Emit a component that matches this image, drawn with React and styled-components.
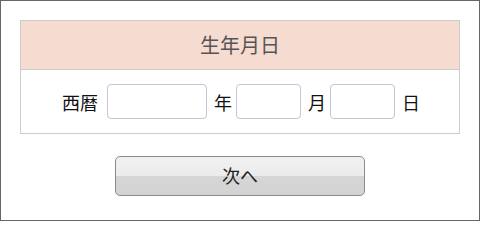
import React from "react";
import styled, { createGlobalStyle } from "styled-components";

const Global = createGlobalStyle`
  html, body { margin: 0; padding: 0; background: #fff; }
  body { font-family: "Noto Sans CJK JP", "Noto Sans", sans-serif; }
  * { box-sizing: border-box; }
`;

const Frame = styled.div`
  width: 480px;
  height: 221px;
  border: 1px solid #666;
  padding: 19px 19px 0 19px;
  display: flex;
  flex-direction: column;
  align-items: center;
`;

const Table = styled.div`
  width: 440px;
  border: 1px solid #cccccc;
`;

const Header = styled.div`
  height: 49px;
  background: #f5dbd0;
  border-bottom: 1px solid #cccccc;
  display: flex;
  align-items: center;
  justify-content: center;
  font-size: 20px;
  color: #555;
  padding-bottom: 2px;
`;

const Body = styled.div`
  height: 63px;
  display: flex;
  align-items: center;
  justify-content: center;
  padding-left: 2px;
  font-size: 18px;
  color: #111;
`;

const Label = styled.span`
  line-height: 1;
  margin-right: ${(p) => p.$mr}px;
  margin-left: ${(p) => p.$ml || 0}px;
`;

const Field = styled.input`
  width: ${(p) => p.$w}px;
  height: 35px;
  border: 1px solid #c4c4d4;
  border-radius: 4px;
  background: #fff;
  margin: 0;
  padding: 0 4px;
  font-size: 16px;
  outline: none;
`;

const Button = styled.button`
  margin-top: 22px;
  width: 250px;
  height: 40px;
  border: 1px solid #8a8a8a;
  border-radius: 5px;
  background: linear-gradient(to bottom, #f1f1f1 0%, #ebebeb 50%, #d6d6d6 50%, #d3d3d3 100%);
  font-family: "Noto Sans CJK JP", sans-serif;
  font-size: 18px;
  color: #222;
  padding: 0 0 2px 0;
  cursor: pointer;
`;

export default function App() {
  return (
    <>
      <Global />
      <Frame>
        <Table>
          <Header>生年月日</Header>
          <Body>
            <Label $mr={9}>西暦</Label>
            <Field $w={100} />
            <Label $ml={7} $mr={4}>年</Label>
            <Field $w={65} />
            <Label $ml={7} $mr={4}>月</Label>
            <Field $w={65} />
            <Label $ml={7} $mr={0}>日</Label>
          </Body>
        </Table>
        <Button>次へ</Button>
      </Frame>
    </>
  );
}
